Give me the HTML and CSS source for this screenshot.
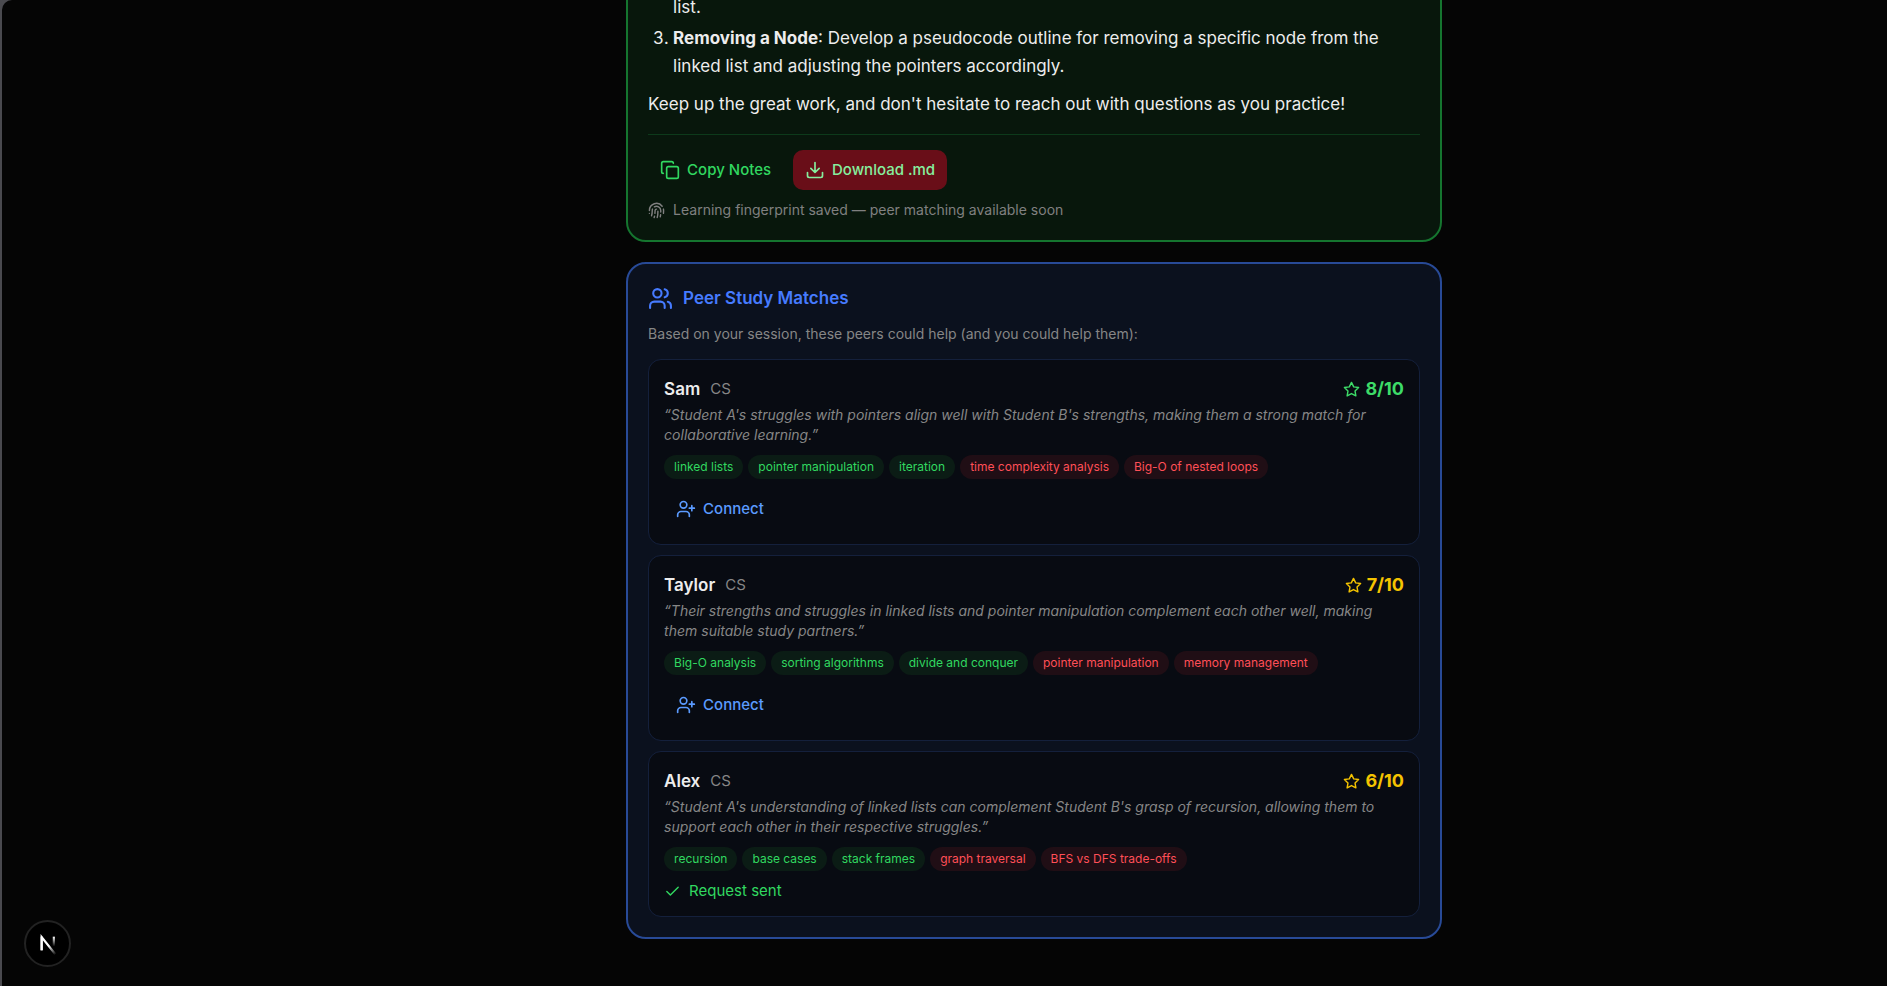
FILE: index.html
```html
<!DOCTYPE html>
<html lang="en">
<head>
    <meta charset="UTF-8">
    <meta name="viewport" content="width=device-width, initial-scale=1.0">
    <title>Study Session</title>
    <link rel="stylesheet" href="styles.css">
</head>
<body>

    <!-- Shared icons -->
    <svg class="icon-sprite" aria-hidden="true">
        <symbol id="icon-user-plus" viewBox="0 0 24 24">
            <path d="M16 21v-2a4 4 0 0 0-4-4H6a4 4 0 0 0-4 4v2"/>
            <circle cx="9" cy="7" r="4"/>
            <path d="M19 8v6M22 11h-6"/>
        </symbol>
        <symbol id="icon-star" viewBox="0 0 24 24">
            <path d="M12 2l3.09 6.26L22 9.27l-5 4.87 1.18 6.88L12 17.77l-6.18 3.25L7 14.14 2 9.27l6.91-1.01z"/>
        </symbol>
    </svg>

    <main class="page">
        <div class="chat">

            <!-- Session Notes -->
            <section class="card notes-card">
                <ol class="notes-list" start="2">
                    <li class="continued">list.</li>
                    <li><strong>Removing a Node</strong>: Develop a pseudocode outline for removing a specific node from the linked list and adjusting the pointers accordingly.</li>
                </ol>
                <p class="notes-text">Keep up the great work, and don't hesitate to reach out with questions as you practice!</p>

                <div class="notes-actions">
                    <button type="button" class="btn btn-copy">
                        <svg class="icon icon-md" viewBox="0 0 24 24">
                            <rect x="8" y="8" width="14" height="14" rx="2"/>
                            <path d="M4 16c-1.1 0-2-.9-2-2V4c0-1.1.9-2 2-2h10c1.1 0 2 .9 2 2"/>
                        </svg>
                        Copy Notes
                    </button>
                    <button type="button" class="btn btn-download">
                        <svg class="icon icon-md" viewBox="0 0 24 24">
                            <path d="M21 15v4a2 2 0 0 1-2 2H5a2 2 0 0 1-2-2v-4"/>
                            <path d="M7 10l5 5 5-5M12 15V3"/>
                        </svg>
                        Download .md
                    </button>
                </div>

                <p class="fingerprint">
                    <svg class="icon icon-sm" viewBox="0 0 24 24">
                        <path d="M12 10a2 2 0 0 0-2 2c0 1.02-.1 2.51-.26 4"/>
                        <path d="M14 13.12c0 2.38 0 6.38-1 8.88"/>
                        <path d="M17.29 21.02c.12-.6.43-2.3.5-3.02"/>
                        <path d="M2 12a10 10 0 0 1 18-6"/>
                        <path d="M2 16h.01"/>
                        <path d="M21.8 16c.2-2 .131-5.354 0-6"/>
                        <path d="M5 19.5C5.5 18 6 15 6 12a6 6 0 0 1 .34-2"/>
                        <path d="M8.65 22c.21-.66.45-1.32.57-2"/>
                        <path d="M9 6.8a6 6 0 0 1 9 5.2v2"/>
                    </svg>
                    Learning fingerprint saved — peer matching available soon
                </p>
            </section>

            <!-- Peer Matches -->
            <section class="card peers-card">
                <h2>
                    <svg class="icon icon-lg" viewBox="0 0 24 24">
                        <path d="M16 21v-2a4 4 0 0 0-4-4H6a4 4 0 0 0-4 4v2"/>
                        <circle cx="9" cy="7" r="4"/>
                        <path d="M22 21v-2a4 4 0 0 0-3-3.87"/>
                        <path d="M16 3.13a4 4 0 0 1 0 7.75"/>
                    </svg>
                    Peer Study Matches
                </h2>
                <p class="peers-intro">Based on your session, these peers could help (and you could help them):</p>

                <div class="peer-list">
                    <article class="peer">
                        <header class="peer-header">
                            <h3>Sam</h3>
                            <span class="subject">CS</span>
                            <span class="score score-high"><svg class="icon icon-sm"><use href="#icon-star"/></svg>8/10</span>
                        </header>
                        <p class="reason">“Student A's struggles with pointers align well with Student B's strengths, making them a strong match for collaborative learning.”</p>
                        <ul class="tags">
                            <li class="strength">linked lists</li>
                            <li class="strength">pointer manipulation</li>
                            <li class="strength">iteration</li>
                            <li class="struggle">time complexity analysis</li>
                            <li class="struggle">Big-O of nested loops</li>
                        </ul>
                        <button type="button" class="btn btn-connect"><svg class="icon icon-md"><use href="#icon-user-plus"/></svg>Connect</button>
                    </article>

                    <article class="peer">
                        <header class="peer-header">
                            <h3>Taylor</h3>
                            <span class="subject">CS</span>
                            <span class="score score-medium"><svg class="icon icon-sm"><use href="#icon-star"/></svg>7/10</span>
                        </header>
                        <p class="reason">“Their strengths and struggles in linked lists and pointer manipulation complement each other well, making them suitable study partners.”</p>
                        <ul class="tags">
                            <li class="strength">Big-O analysis</li>
                            <li class="strength">sorting algorithms</li>
                            <li class="strength">divide and conquer</li>
                            <li class="struggle">pointer manipulation</li>
                            <li class="struggle">memory management</li>
                        </ul>
                        <button type="button" class="btn btn-connect"><svg class="icon icon-md"><use href="#icon-user-plus"/></svg>Connect</button>
                    </article>

                    <article class="peer">
                        <header class="peer-header">
                            <h3>Alex</h3>
                            <span class="subject">CS</span>
                            <span class="score score-medium"><svg class="icon icon-sm"><use href="#icon-star"/></svg>6/10</span>
                        </header>
                        <p class="reason">“Student A's understanding of linked lists can complement Student B's grasp of recursion, allowing them to support each other in their respective struggles.”</p>
                        <ul class="tags">
                            <li class="strength">recursion</li>
                            <li class="strength">base cases</li>
                            <li class="strength">stack frames</li>
                            <li class="struggle">graph traversal</li>
                            <li class="struggle">BFS vs DFS trade-offs</li>
                        </ul>
                        <p class="request-sent">
                            <svg class="icon icon-sm" viewBox="0 0 24 24"><path d="M20 6L9 17l-5-5"/></svg>
                            Request sent
                        </p>
                    </article>
                </div>
            </section>
        </div>
    </main>

    <!-- Dev tools badge -->
    <button type="button" class="dev-badge" aria-label="Open dev tools">
        <svg viewBox="0 0 40 40">
            <defs>
                <linearGradient id="fade-diagonal" gradientUnits="userSpaceOnUse" x1="22" y1="22" x2="29" y2="31">
                    <stop offset="0" stop-color="#fff"/>
                    <stop offset="1" stop-color="#fff" stop-opacity="0"/>
                </linearGradient>
                <linearGradient id="fade-stem" gradientUnits="userSpaceOnUse" x1="26" y1="13" x2="26" y2="23">
                    <stop offset="0" stop-color="#fff"/>
                    <stop offset="1" stop-color="#fff" stop-opacity="0"/>
                </linearGradient>
            </defs>
            <path d="M14 27V13.5L28 31" fill="none" stroke="url(#fade-diagonal)" stroke-width="2.2"/>
            <path d="M14 27V13" stroke="#fff" stroke-width="2.2"/>
            <path d="M26.5 13v10" stroke="url(#fade-stem)" stroke-width="2.2"/>
        </svg>
    </button>

</body>
</html>
```
FILE: styles.css
```css
* {
    box-sizing: border-box;
}

body {
    margin: 0;
    background-color: #4a4a4f;
    color: #ededed;
    font-family: Inter, "Liberation Sans", sans-serif;
    font-size: 15px;
    line-height: 20px;
}

h2, h3, p, ul, ol {
    margin: 0;
    padding: 0;
    font-size: inherit;
    font-weight: inherit;
}

.page {
    display: flex;
    flex-direction: column;
    justify-content: flex-end;
    align-items: center;
    height: 100vh;
    margin-left: 2px;
    padding-bottom: 47px;
    overflow: hidden;
    background-color: #050505;
    border-radius: 10px 0 0 0;
}

.chat {
    display: flex;
    flex-direction: column;
    align-items: flex-end;
    gap: 20px;
    width: 100%;
    max-width: 995px;
}

.card {
    width: 82%;
    padding: 20px;
    border: 2px solid;
    border-radius: 20px;
}

/* Icons */
.icon-sprite {
    display: none;
}

.icon {
    flex: none;
    fill: none;
    stroke: currentColor;
    stroke-width: 2;
    stroke-linecap: round;
    stroke-linejoin: round;
}

.icon-sm {
    width: 17px;
    height: 17px;
}

.icon-md {
    width: 20px;
    height: 20px;
}

.icon-lg {
    width: 25px;
    height: 25px;
}

/* Buttons */
.btn {
    display: inline-flex;
    align-items: center;
    gap: 7px;
    height: 40px;
    padding: 0 12px;
    border: none;
    border-radius: 10px;
    background: none;
    font: inherit;
    font-weight: 500;
    cursor: pointer;
}

.btn-copy {
    color: #31d860;
}

.btn-download {
    background-color: #690e18;
    color: #86ef9e;
}

.btn-connect {
    margin-top: 10px;
    color: #5b9bff;
}

/* Session notes */
.notes-card {
    padding-top: 60px;
    background-color: #08170c;
    border-color: #15752f;
}

.notes-list {
    display: flex;
    flex-direction: column;
    gap: 3px;
    padding-left: 25px;
    font-size: 17px;
    line-height: 28px;
}

.notes-list .continued {
    list-style: none;
}

.notes-text {
    margin-top: 10px;
    font-size: 17px;
    line-height: 28px;
}

.notes-actions {
    display: flex;
    gap: 10px;
    margin-top: 16px;
    padding-top: 15px;
    border-top: 1px solid #0d3a1b;
}

.fingerprint {
    display: flex;
    align-items: center;
    gap: 8px;
    margin-top: 10px;
    color: #808080;
    font-size: 14px;
}

/* Peer matches */
.peers-card {
    background-color: #0b111e;
    border-color: #284a97;
}

.peers-card h2 {
    display: flex;
    align-items: center;
    gap: 10px;
    height: 28px;
    color: #467bff;
    font-size: 17px;
    font-weight: 600;
}

.peers-intro {
    margin-top: 12px;
    color: #868686;
    font-size: 14px;
}

.peer-list {
    display: flex;
    flex-direction: column;
    gap: 10px;
    margin-top: 15px;
}

.peer {
    padding: 15px;
    border: 1px solid #14203c;
    border-radius: 13px;
    background-color: #080b12;
}

.peer-header {
    display: flex;
    align-items: center;
    gap: 10px;
    height: 28px;
}

.peer-header h3 {
    font-size: 17px;
    font-weight: 600;
}

.subject {
    color: #868686;
}

.score {
    display: flex;
    align-items: center;
    gap: 5px;
    margin-left: auto;
    font-size: 18px;
    font-weight: 700;
}

.score-high {
    color: #3ddc68;
}

.score-medium {
    color: #f5c400;
}

.reason {
    margin-top: 2px;
    color: #868686;
    font-size: 14px;
    font-style: italic;
}

.tags {
    display: flex;
    flex-wrap: wrap;
    gap: 5px;
    margin-top: 10px;
    list-style: none;
}

.tags li {
    padding: 2px 10px;
    border-radius: 12px;
    font-size: 12px;
}

.strength {
    background-color: #0b1c15;
    color: #31d860;
}

.struggle {
    background-color: #200e15;
    color: #ff4f57;
}

.request-sent {
    display: flex;
    align-items: center;
    gap: 8px;
    margin-top: 10px;
    color: #31d860;
}

/* Dev tools badge */
.dev-badge {
    position: fixed;
    left: 24px;
    bottom: 19px;
    width: 47px;
    height: 47px;
    padding: 2px;
    border: 2px solid #222;
    border-radius: 50%;
    background-color: #000;
    cursor: pointer;
}

.dev-badge svg {
    display: block;
    width: 100%;
}

@media (max-width: 768px) {
    .card {
        width: 100%;
    }
}
```
